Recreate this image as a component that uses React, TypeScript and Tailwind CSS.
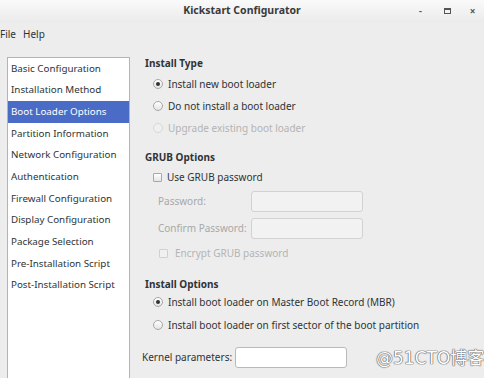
import { ReactNode } from 'react'

const sections = [
  'Basic Configuration',
  'Installation Method',
  'Boot Loader Options',
  'Partition Information',
  'Network Configuration',
  'Authentication',
  'Firewall Configuration',
  'Display Configuration',
  'Package Selection',
  'Pre-Installation Script',
  'Post-Installation Script',
]

function Radio({ checked, disabled }: { checked?: boolean; disabled?: boolean }) {
  return (
    <span
      className={`flex items-center justify-center w-[10px] h-[10px] rounded-full border ${
        disabled ? 'border-[#d6d6d6] bg-[#f0f0f0]' : 'border-[#a8a8a8] bg-gradient-to-b from-white to-[#e4e4e4]'
      }`}
    >
      {checked && <span className="w-[4px] h-[4px] rounded-full bg-[#2e3436]" />}
    </span>
  )
}

function Check({ disabled }: { disabled?: boolean }) {
  return (
    <span
      className={`w-[9px] h-[9px] rounded-[1px] border ${
        disabled ? 'border-[#d0d0d0] bg-[#f0f0f0]' : 'border-[#a8a8a8] bg-gradient-to-b from-white to-[#e4e4e4]'
      }`}
    />
  )
}

function Row({ children, className }: { children: ReactNode; className: string }) {
  return <div className={`flex items-center ${className}`}>{children}</div>
}

function Input({ disabled }: { disabled?: boolean }) {
  return (
    <div
      className={`w-[112px] h-[21px] rounded-[3px] border ${
        disabled ? 'border-[#d2d2d2] bg-[#f2f2f2]' : 'border-[#b9b9b9] bg-white'
      }`}
    />
  )
}

export default function App() {
  return (
    <div className="relative w-[484px] h-[378px] overflow-hidden bg-[#ededed] text-[#2e3436] text-[10px] font-['Noto_Sans','DejaVu_Sans',sans-serif]">
      {/* title bar */}
      <div className="relative h-[22px] flex items-center justify-center bg-gradient-to-b from-[#fafafa] to-[#ebebeb]">
        <span className="font-bold text-[10.5px] text-[#3a3a3a]">Kickstart Configurator</span>
        <div className="absolute right-0 top-0 h-full flex items-center text-[#555]">
          <span className="w-[27px] text-center text-[9px] font-bold">-</span>
          <span className="w-[27px] flex justify-center">
            <span className="w-[7px] h-[6px] border border-[#555] border-t-2" />
          </span>
          <span className="w-[23px] text-center text-[10px] font-bold">×</span>
        </div>
      </div>

      {/* menu */}
      <div className="h-[24px] flex items-center gap-[7px]">
        <span>File</span>
        <span>Help</span>
      </div>

      <div className="flex">
        {/* sidebar */}
        <div className="mt-[11px] ml-[7px] w-[123px] h-[340px] bg-white border border-[#b4b4b4] text-[9.8px]">
          {sections.map((s) => (
            <div
              key={s}
              className={`h-[21.7px] flex items-center pl-[3px] ${
                s === 'Boot Loader Options' ? 'bg-[#4a6bc6] text-white' : ''
              }`}
            >
              {s}
            </div>
          ))}
        </div>

        {/* content */}
        <div className="flex-1 pl-[15px] pt-[7px]">
          <Row className="h-[20px] font-bold">Install Type</Row>
          <Row className="h-[22px] pl-[8px] gap-[5px]">
            <Radio checked />
            <span>Install new boot loader</span>
          </Row>
          <Row className="h-[22px] pl-[8px] gap-[5px]">
            <Radio />
            <span>Do not install a boot loader</span>
          </Row>
          <Row className="h-[22px] pl-[8px] gap-[5px] text-[#b4b4b4]">
            <Radio disabled />
            <span>Upgrade existing boot loader</span>
          </Row>

          <Row className="h-[20px] mt-[8px] font-bold">GRUB Options</Row>
          <Row className="h-[20px] pl-[8px] gap-[5px]">
            <Check />
            <span>Use GRUB password</span>
          </Row>
          <Row className="h-[23px] mt-[3px] pl-[13px] text-[#a8a8a8]">
            <span className="w-[93px]">Password:</span>
            <Input disabled />
          </Row>
          <Row className="h-[23px] mt-[4px] pl-[13px] text-[#a8a8a8]">
            <span className="w-[93px]">Confirm Password:</span>
            <Input disabled />
          </Row>
          <Row className="h-[20px] mt-[3px] pl-[14px] gap-[7px] text-[#b4b4b4]">
            <Check disabled />
            <span>Encrypt GRUB password</span>
          </Row>

          <Row className="h-[16px] mt-[13px] font-bold">Install Options</Row>
          <Row className="h-[20px] pl-[8px] gap-[5px]">
            <Radio checked />
            <span>Install boot loader on Master Boot Record (MBR)</span>
          </Row>
          <Row className="h-[26px] pl-[8px] gap-[5px]">
            <Radio />
            <span>Install boot loader on first sector of the boot partition</span>
          </Row>
          <Row className="h-[23px] mt-[8px] -ml-[3px]">
            <span className="w-[93px]">Kernel parameters:</span>
            <Input />
          </Row>
        </div>
      </div>

      {/* watermark */}
      <div className="absolute left-[376px] top-[347px] whitespace-nowrap text-[17px] leading-[22px] text-white font-['DejaVu_Sans','Noto_Sans_CJK_SC',sans-serif] [text-shadow:0_0_1px_#555,0_0_1px_#555,0_0_1px_#555]">
        @51CTO博客
      </div>
    </div>
  )
}
